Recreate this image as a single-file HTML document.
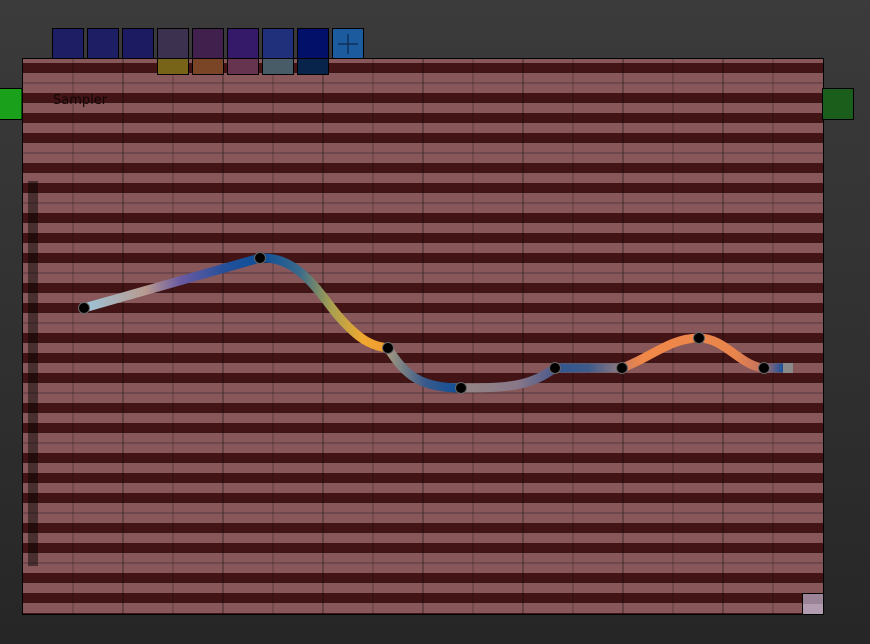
<!DOCTYPE html>
<html><head><meta charset="utf-8"><style>
html,body{margin:0;padding:0;width:870px;height:644px;overflow:hidden;background:#333}
svg{display:block}
</style></head><body>
<svg width="870" height="644" viewBox="0 0 870 644" xmlns="http://www.w3.org/2000/svg">
<defs>
<linearGradient id="bg" x1="0" y1="0" x2="0" y2="1"><stop offset="0" stop-color="#3b3b3b"/><stop offset="0.5" stop-color="#313131"/><stop offset="1" stop-color="#262626"/></linearGradient>
<pattern id="keys" patternUnits="userSpaceOnUse" x="0" y="63" width="870" height="120">
<rect x="0" y="0" width="870" height="120" fill="#87575a"/>
<rect x="0" y="0" width="870" height="10" fill="#421416"/>
<rect x="0" y="30" width="870" height="10" fill="#421416"/>
<rect x="0" y="50" width="870" height="10" fill="#421416"/>
<rect x="0" y="70" width="870" height="10" fill="#421416"/>
<rect x="0" y="100" width="870" height="10" fill="#421416"/>
<rect x="0" y="19.5" width="870" height="1" fill="#4a3336" opacity="0.8"/>
<rect x="0" y="89.5" width="870" height="1" fill="#4a3336" opacity="0.8"/>
<rect x="0" y="9" width="870" height="1" fill="#2e1a1b" opacity="0.5"/>
<rect x="0" y="39" width="870" height="1" fill="#2e1a1b" opacity="0.5"/>
<rect x="0" y="59" width="870" height="1" fill="#2e1a1b" opacity="0.5"/>
<rect x="0" y="79" width="870" height="1" fill="#2e1a1b" opacity="0.5"/>
<rect x="0" y="109" width="870" height="1" fill="#2e1a1b" opacity="0.5"/>
</pattern>
<linearGradient id="g1" gradientUnits="userSpaceOnUse" x1="84" y1="0" x2="260" y2="0"><stop offset="0" stop-color="#9cc6da"/><stop offset="0.35" stop-color="#b89a90"/><stop offset="0.55" stop-color="#6a5aa2"/><stop offset="0.8" stop-color="#24509a"/><stop offset="1" stop-color="#0d4f98"/></linearGradient>
<linearGradient id="g2" gradientUnits="userSpaceOnUse" x1="262" y1="0" x2="388" y2="0"><stop offset="0" stop-color="#0d4f98"/><stop offset="0.3" stop-color="#3a6a8a"/><stop offset="0.55" stop-color="#a8a050"/><stop offset="0.8" stop-color="#f0a830"/><stop offset="1" stop-color="#f09a30"/></linearGradient>
<linearGradient id="g3" gradientUnits="userSpaceOnUse" x1="388" y1="0" x2="461" y2="0"><stop offset="0" stop-color="#a09880"/><stop offset="0.5" stop-color="#3a5a8a"/><stop offset="1" stop-color="#0d4f98"/></linearGradient>
<linearGradient id="g4" gradientUnits="userSpaceOnUse" x1="461" y1="0" x2="555" y2="0"><stop offset="0" stop-color="#958585"/><stop offset="0.6" stop-color="#887888"/><stop offset="1" stop-color="#4a5a8c"/></linearGradient>
<linearGradient id="g5" gradientUnits="userSpaceOnUse" x1="555" y1="0" x2="622" y2="0"><stop offset="0" stop-color="#2e5690"/><stop offset="0.5" stop-color="#3e5a8a"/><stop offset="1" stop-color="#907a80"/></linearGradient>
<linearGradient id="g6" gradientUnits="userSpaceOnUse" x1="622" y1="0" x2="764" y2="0"><stop offset="0" stop-color="#d07c60"/><stop offset="0.15" stop-color="#f08848"/><stop offset="0.8" stop-color="#e8844c"/><stop offset="1" stop-color="#c07060"/></linearGradient>
<linearGradient id="g7" gradientUnits="userSpaceOnUse" x1="764" y1="0" x2="785" y2="0"><stop offset="0" stop-color="#a86a70"/><stop offset="1" stop-color="#0a4fa0"/></linearGradient>
</defs>
<rect width="870" height="644" fill="url(#bg)"/>
<rect x="22.5" y="58.5" width="801" height="556" fill="url(#keys)" stroke="#000" stroke-width="1"/>
<rect x="23" y="59" width="800" height="4" fill="#87575a"/>
<g stroke="#000" stroke-opacity="0.14" stroke-width="2">
<line x1="73" y1="59" x2="73" y2="614"/><line x1="173" y1="59" x2="173" y2="614"/><line x1="273" y1="59" x2="273" y2="614"/><line x1="373" y1="59" x2="373" y2="614"/><line x1="473" y1="59" x2="473" y2="614"/><line x1="573" y1="59" x2="573" y2="614"/><line x1="673" y1="59" x2="673" y2="614"/><line x1="773" y1="59" x2="773" y2="614"/>
</g>
<g stroke="#000" stroke-opacity="0.24" stroke-width="2">
<line x1="123" y1="59" x2="123" y2="614"/><line x1="223" y1="59" x2="223" y2="614"/><line x1="323" y1="59" x2="323" y2="614"/><line x1="423" y1="59" x2="423" y2="614"/><line x1="523" y1="59" x2="523" y2="614"/><line x1="623" y1="59" x2="623" y2="614"/><line x1="723" y1="59" x2="723" y2="614"/>
</g>
<rect x="28" y="181" width="10" height="385" fill="#000" opacity="0.45"/>
<text x="53" y="104" font-family="DejaVu Sans, sans-serif" font-size="13" fill="#140606">Sampler</text>
<rect x="-1" y="88.5" width="23" height="31" fill="#1aa01a" stroke="#000"/>
<rect x="822.5" y="88.5" width="31" height="31" fill="#1b5e1b" stroke="#000"/>
<rect x="802.5" y="593.5" width="21" height="21" fill="#b29cb0" stroke="#000"/>
<rect x="803" y="594" width="20" height="10" fill="#9c8498"/>
<g stroke="#000" stroke-width="1">
<rect x="52.5" y="28.5" width="31" height="30" fill="#1e1e64"/>
<rect x="87.5" y="28.5" width="31" height="30" fill="#1e1e64"/>
<rect x="122.5" y="28.5" width="31" height="30" fill="#1c1a60"/>
<rect x="157.5" y="28.5" width="31" height="30" fill="#3c3250"/>
<rect x="192.5" y="28.5" width="31" height="30" fill="#42204e"/>
<rect x="227.5" y="28.5" width="31" height="30" fill="#361a6a"/>
<rect x="262.5" y="28.5" width="31" height="30" fill="#20307a"/>
<rect x="297.5" y="28.5" width="31" height="30" fill="#02106a"/>
<rect x="332.5" y="28.5" width="31" height="30" fill="#1c5c9e"/>
<rect x="157.5" y="58.5" width="31" height="16" fill="#786418"/>
<rect x="192.5" y="58.5" width="31" height="16" fill="#7a4426"/>
<rect x="227.5" y="58.5" width="31" height="16" fill="#66344e"/>
<rect x="262.5" y="58.5" width="31" height="16" fill="#485c68"/>
<rect x="297.5" y="58.5" width="31" height="16" fill="#08244a"/>
</g>
<g stroke="#0e2e58" stroke-width="1.5"><line x1="338" y1="44" x2="358" y2="44"/><line x1="348" y1="34" x2="348" y2="54"/></g>
<g fill="none" stroke-width="9" stroke-linecap="butt">
<path d="M84 308 L260 258" stroke="url(#g1)"/>
<path d="M260 258 C300 256,320 295,340 318 C358 338,370 346,388 348" stroke="url(#g2)"/>
<path d="M388 348 C405 375,420 388,461 388" stroke="url(#g3)"/>
<path d="M461 388 C510 388,530 386,555 368" stroke="url(#g4)"/>
<path d="M555 368 L622 368" stroke="url(#g5)"/>
<path d="M622 368 C650 358,670 338,699 338 C725 338,740 366,764 368" stroke="url(#g6)"/>
<path d="M764 368 L784 368" stroke="url(#g7)"/>
</g>
<rect x="783" y="363" width="10" height="10" fill="#8a8a8a"/>
<g fill="#000" stroke="#666" stroke-width="1">
<circle cx="84" cy="308" r="5.5"/><circle cx="260" cy="258" r="5.5"/><circle cx="388" cy="348" r="5.5"/><circle cx="461" cy="388" r="5.5"/><circle cx="555" cy="368" r="5.5"/><circle cx="622" cy="368" r="5.5"/><circle cx="699" cy="338" r="5.5"/><circle cx="764" cy="368" r="5.5"/>
</g>
</svg>
</body></html>
